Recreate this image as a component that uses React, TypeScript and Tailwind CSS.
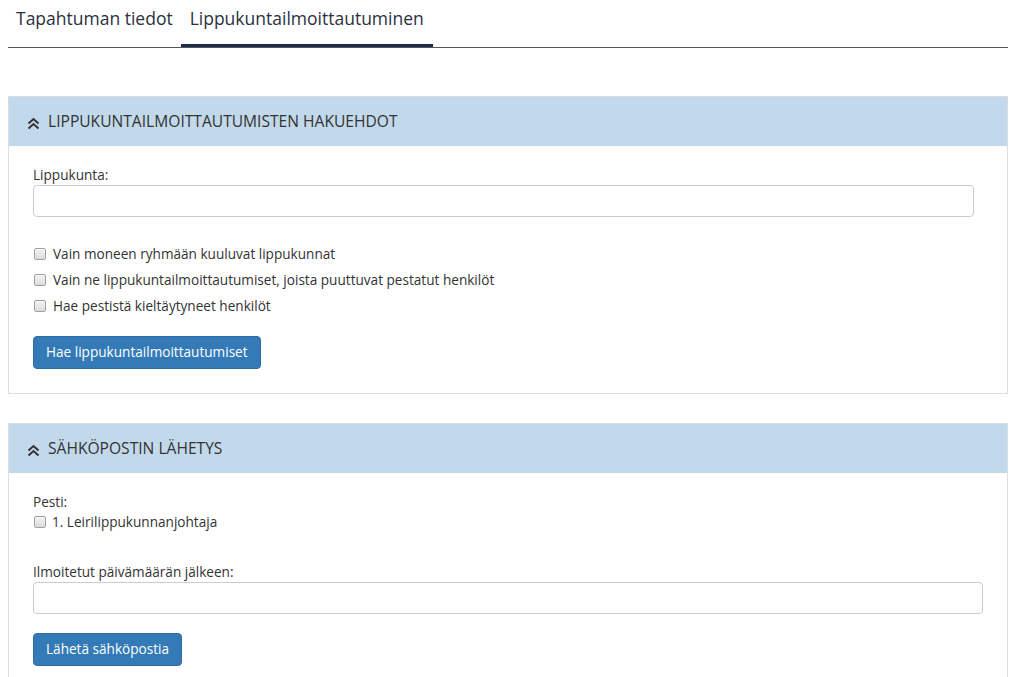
import { useState } from "react";

const font = { fontFamily: '"Open Sans", "Liberation Sans", sans-serif' };

const Chevrons = () => (
  <svg width="13" height="13" viewBox="0 0 13 13" className="mr-[8px] mt-[3px] shrink-0">
    <path d="M1.5 6.5 L6.5 2 L11.5 6.5" fill="none" stroke="#333" strokeWidth="2" />
    <path d="M1.5 11.5 L6.5 7 L11.5 11.5" fill="none" stroke="#333" strokeWidth="2" />
  </svg>
);

const Box = () => {
  const [on, setOn] = useState(false);
  return (
    <input
      type="checkbox"
      checked={on}
      onChange={() => setOn(!on)}
      className="ml-[1px] h-[12px] w-[12px] shrink-0 appearance-none rounded-[2px] border border-[#a0a0a0] bg-gradient-to-b from-[#f4f4f4] to-[#dcdcdc] checked:bg-[#337ab7]"
    />
  );
};

const Check = ({ label }: { label: string }) => (
  <label className="flex h-[26px] items-center gap-[7px] text-[13.6px] text-[#333]">
    <Box />
    {label}
  </label>
);

const Panel = ({ title, children }: { title: string; children: React.ReactNode }) => (
  <section className="border border-[#ddd] bg-white">
    <div className="flex h-[49px] items-center bg-[#c2d9ec] pl-[18px] text-[15.6px] text-[#333]">
      <Chevrons />
      {title}
    </div>
    {children}
  </section>
);

export default function App() {
  return (
    <div className="min-h-screen bg-white pl-[8px] pr-[15px]" style={font}>
      {/* tabs */}
      <nav className="flex h-[48px] border-b border-[#555] pl-[1px] text-[17.5px] text-[#2a3140]">
        <a className="flex items-center px-[7px] pb-[11px]">Tapahtuman tiedot</a>
        <a className="ml-[1px] flex items-center border-b-[3px] border-[#1c2b4d] px-[9px] pb-[8px]">
          Lippukuntailmoittautuminen
        </a>
      </nav>

      <div className="mt-[48px] space-y-[29px]">
        <Panel title="LIPPUKUNTAILMOITTAUTUMISTEN HAKUEHDOT">
          <div className="pb-[24px] pl-[24px] pr-[33px] pt-[19px]">
            <div className="text-[13.6px] leading-[20px] text-[#333]">Lippukunta:</div>
            <input className="h-[32px] w-full rounded-[4px] border border-[#ccc] px-[10px] text-[14px] outline-none" />
            <div className="mt-[24px] flex flex-col">
              <Check label="Vain moneen ryhmään kuuluvat lippukunnat" />
              <Check label="Vain ne lippukuntailmoittautumiset, joista puuttuvat pestatut henkilöt" />
              <Check label="Hae pestistä kieltäytyneet henkilöt" />
            </div>
            <button className="mt-[17px] h-[33px] rounded-[4px] border border-[#2e6da4] bg-[#337ab7] px-[12px] text-[13.6px] text-white">
              Hae lippukuntailmoittautumiset
            </button>
          </div>
        </Panel>

        <Panel title="SÄHKÖPOSTIN LÄHETYS">
          <div className="pb-[24px] pl-[24px] pr-[24px] pt-[19px]">
            <div className="text-[13.6px] leading-[20px] text-[#333]">Pesti:</div>
            <label className="flex h-[20px] items-center gap-[6px] text-[13.6px] text-[#333]">
              <Box />
              1. Leirilippukunnanjohtaja
            </label>
            <div className="mt-[30px] text-[13.6px] leading-[20px] text-[#333]">
              Ilmoitetut päivämäärän jälkeen:
            </div>
            <input className="h-[32px] w-full rounded-[4px] border border-[#ccc] px-[10px] text-[14px] outline-none" />
            <button className="mt-[19px] h-[33px] rounded-[4px] border border-[#2e6da4] bg-[#337ab7] px-[12px] text-[13.6px] text-white">
              Lähetä sähköpostia
            </button>
          </div>
        </Panel>
      </div>
    </div>
  );
}
